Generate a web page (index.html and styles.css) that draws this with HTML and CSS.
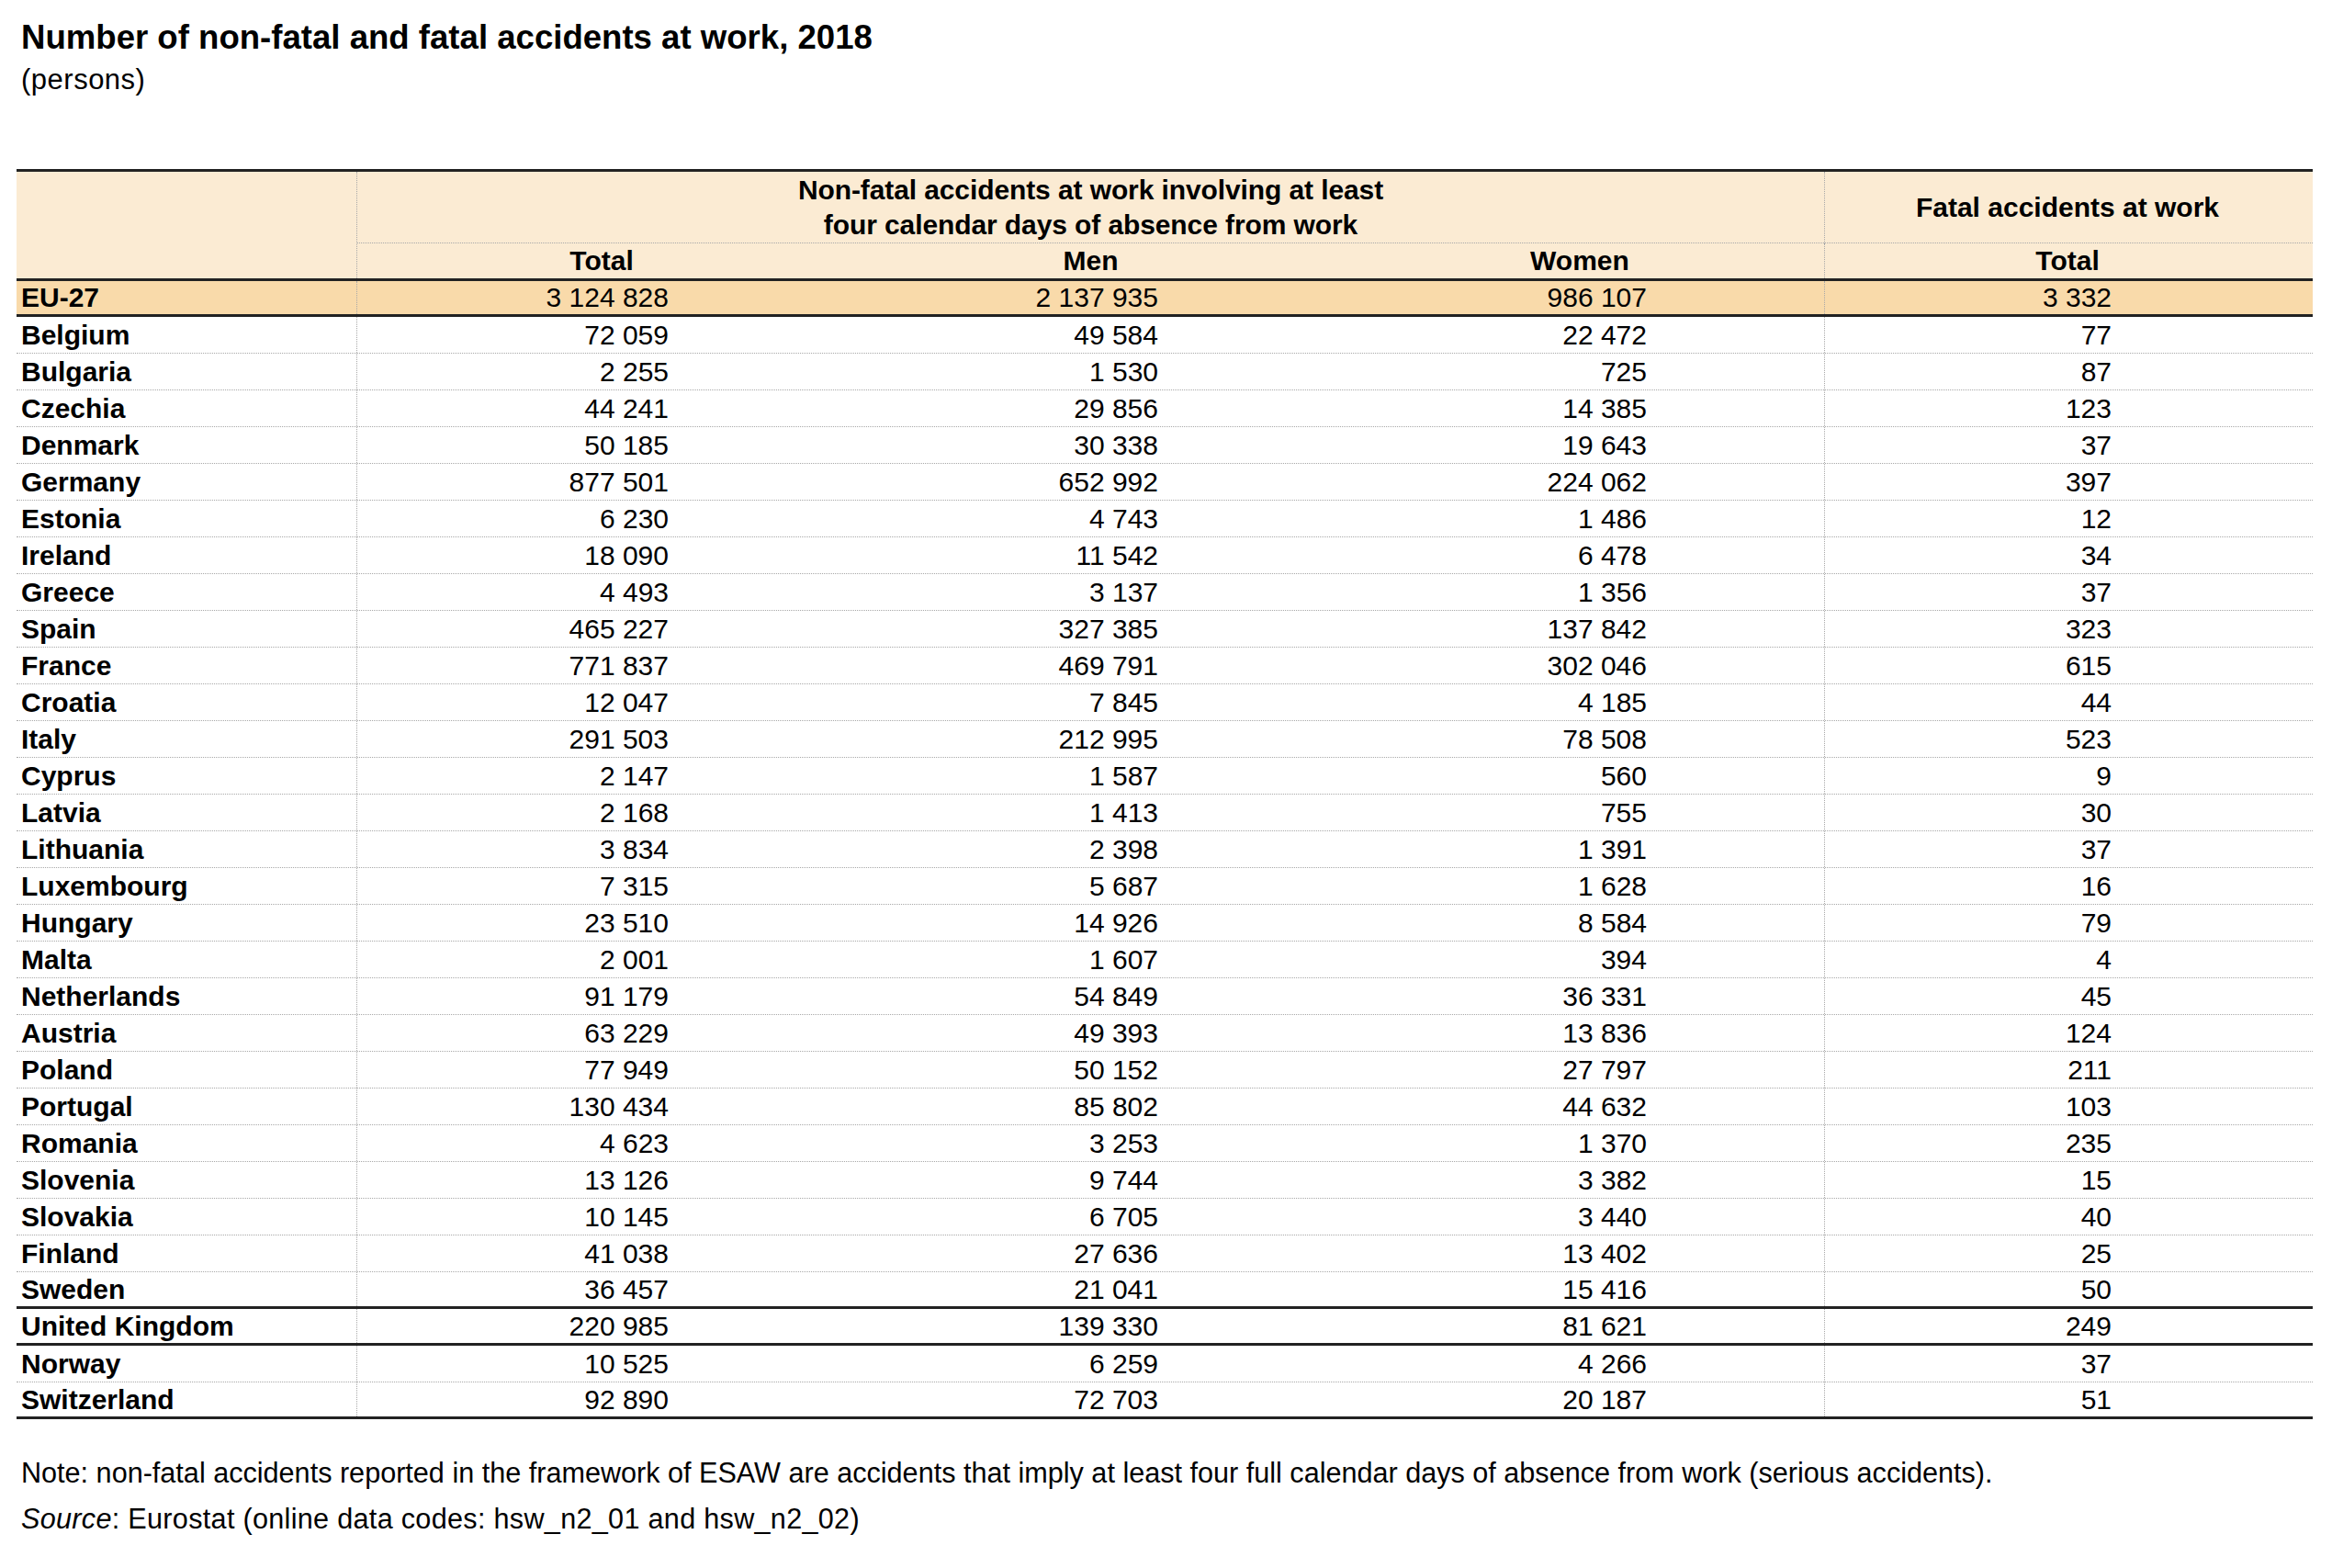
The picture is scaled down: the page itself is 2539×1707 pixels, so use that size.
FILE: index.html
```html
<!DOCTYPE html>
<html lang="en">
<head>
<meta charset="utf-8">
<title>Number of non-fatal and fatal accidents at work, 2018</title>
<link rel="stylesheet" href="styles.css">
</head>
<body>
<div class="page">
  <h1 class="title">Number of non-fatal and fatal accidents at work, 2018</h1>
  <p class="unit">(persons)</p>

  <div class="tbl">
    <div class="thead">
      <div class="h-corner"></div>
      <div class="h-group">Non-fatal accidents at work involving at least<br>four calendar days of absence from work</div>
      <div class="h-fatal">Fatal accidents at work</div>
      <div class="h-sub">Total</div>
      <div class="h-sub">Men</div>
      <div class="h-sub">Women</div>
      <div class="h-sub h-sub-fatal">Total</div>
    </div>

    <div class="row eu"><div class="name">EU-27</div><div class="num">3 124 828</div><div class="num">2 137 935</div><div class="num">986 107</div><div class="num fatal">3 332</div></div>
    <div class="row"><div class="name">Belgium</div><div class="num">72 059</div><div class="num">49 584</div><div class="num">22 472</div><div class="num fatal">77</div></div>
    <div class="row"><div class="name">Bulgaria</div><div class="num">2 255</div><div class="num">1 530</div><div class="num">725</div><div class="num fatal">87</div></div>
    <div class="row"><div class="name">Czechia</div><div class="num">44 241</div><div class="num">29 856</div><div class="num">14 385</div><div class="num fatal">123</div></div>
    <div class="row"><div class="name">Denmark</div><div class="num">50 185</div><div class="num">30 338</div><div class="num">19 643</div><div class="num fatal">37</div></div>
    <div class="row"><div class="name">Germany</div><div class="num">877 501</div><div class="num">652 992</div><div class="num">224 062</div><div class="num fatal">397</div></div>
    <div class="row"><div class="name">Estonia</div><div class="num">6 230</div><div class="num">4 743</div><div class="num">1 486</div><div class="num fatal">12</div></div>
    <div class="row"><div class="name">Ireland</div><div class="num">18 090</div><div class="num">11 542</div><div class="num">6 478</div><div class="num fatal">34</div></div>
    <div class="row"><div class="name">Greece</div><div class="num">4 493</div><div class="num">3 137</div><div class="num">1 356</div><div class="num fatal">37</div></div>
    <div class="row"><div class="name">Spain</div><div class="num">465 227</div><div class="num">327 385</div><div class="num">137 842</div><div class="num fatal">323</div></div>
    <div class="row"><div class="name">France</div><div class="num">771 837</div><div class="num">469 791</div><div class="num">302 046</div><div class="num fatal">615</div></div>
    <div class="row"><div class="name">Croatia</div><div class="num">12 047</div><div class="num">7 845</div><div class="num">4 185</div><div class="num fatal">44</div></div>
    <div class="row"><div class="name">Italy</div><div class="num">291 503</div><div class="num">212 995</div><div class="num">78 508</div><div class="num fatal">523</div></div>
    <div class="row"><div class="name">Cyprus</div><div class="num">2 147</div><div class="num">1 587</div><div class="num">560</div><div class="num fatal">9</div></div>
    <div class="row"><div class="name">Latvia</div><div class="num">2 168</div><div class="num">1 413</div><div class="num">755</div><div class="num fatal">30</div></div>
    <div class="row"><div class="name">Lithuania</div><div class="num">3 834</div><div class="num">2 398</div><div class="num">1 391</div><div class="num fatal">37</div></div>
    <div class="row"><div class="name">Luxembourg</div><div class="num">7 315</div><div class="num">5 687</div><div class="num">1 628</div><div class="num fatal">16</div></div>
    <div class="row"><div class="name">Hungary</div><div class="num">23 510</div><div class="num">14 926</div><div class="num">8 584</div><div class="num fatal">79</div></div>
    <div class="row"><div class="name">Malta</div><div class="num">2 001</div><div class="num">1 607</div><div class="num">394</div><div class="num fatal">4</div></div>
    <div class="row"><div class="name">Netherlands</div><div class="num">91 179</div><div class="num">54 849</div><div class="num">36 331</div><div class="num fatal">45</div></div>
    <div class="row"><div class="name">Austria</div><div class="num">63 229</div><div class="num">49 393</div><div class="num">13 836</div><div class="num fatal">124</div></div>
    <div class="row"><div class="name">Poland</div><div class="num">77 949</div><div class="num">50 152</div><div class="num">27 797</div><div class="num fatal">211</div></div>
    <div class="row"><div class="name">Portugal</div><div class="num">130 434</div><div class="num">85 802</div><div class="num">44 632</div><div class="num fatal">103</div></div>
    <div class="row"><div class="name">Romania</div><div class="num">4 623</div><div class="num">3 253</div><div class="num">1 370</div><div class="num fatal">235</div></div>
    <div class="row"><div class="name">Slovenia</div><div class="num">13 126</div><div class="num">9 744</div><div class="num">3 382</div><div class="num fatal">15</div></div>
    <div class="row"><div class="name">Slovakia</div><div class="num">10 145</div><div class="num">6 705</div><div class="num">3 440</div><div class="num fatal">40</div></div>
    <div class="row"><div class="name">Finland</div><div class="num">41 038</div><div class="num">27 636</div><div class="num">13 402</div><div class="num fatal">25</div></div>
    <div class="row sep"><div class="name">Sweden</div><div class="num">36 457</div><div class="num">21 041</div><div class="num">15 416</div><div class="num fatal">50</div></div>
    <div class="row sep"><div class="name">United Kingdom</div><div class="num">220 985</div><div class="num">139 330</div><div class="num">81 621</div><div class="num fatal">249</div></div>
    <div class="row"><div class="name">Norway</div><div class="num">10 525</div><div class="num">6 259</div><div class="num">4 266</div><div class="num fatal">37</div></div>
    <div class="row sep"><div class="name">Switzerland</div><div class="num">92 890</div><div class="num">72 703</div><div class="num">20 187</div><div class="num fatal">51</div></div>
  </div>

  <p class="note">Note: non-fatal accidents reported in the framework of ESAW are accidents that imply at least four full calendar days of absence from work (serious accidents).</p>
  <p class="note source"><em>Source</em>: Eurostat (online data codes: hsw_n2_01 and hsw_n2_02)</p>
</div>
</body>
</html>
```

FILE: styles.css
```css
* {
  box-sizing: border-box;
}

html, body {
  margin: 0;
  padding: 0;
  background: #ffffff;
}

body {
  font-family: "Liberation Sans", Arial, sans-serif;
  color: #000000;
}

.page {
  padding: 18px 0 0 18px;
}

.title {
  margin: 0 0 0 5px;
  font-size: 36.6px;
  font-weight: bold;
  line-height: 46px;
}

.unit {
  margin: 0 0 0 5px;
  font-size: 31px;
  line-height: 46px;
  letter-spacing: 0.5px;
}

.tbl {
  width: 2500px;
  margin-top: 74px;
  font-size: 30px;
}

.thead {
  display: grid;
  grid-template-columns: 371px 532px 533px 532px 532px;
  grid-template-rows: 78px 38px;
  background: #fbebd3;
  border-top: 3px solid #222222;
  border-bottom: 3px solid #222222;
  font-weight: bold;
}

.h-corner {
  grid-column: 1;
  grid-row: 1 / span 2;
  border-right: 1px dotted #a8a8a8;
}

.h-group {
  grid-column: 2 / span 3;
  grid-row: 1;
  display: flex;
  align-items: center;
  justify-content: center;
  text-align: center;
  line-height: 38px;
  border-bottom: 1px dotted #a8a8a8;
  padding-top: 1px;
  letter-spacing: -0.1px;
}

.h-fatal {
  grid-column: 5;
  grid-row: 1;
  display: flex;
  align-items: center;
  justify-content: center;
  border-left: 1px dotted #a8a8a8;
  border-bottom: 1px dotted #a8a8a8;
  padding-right: 3px;
}

.h-sub {
  grid-row: 2;
  display: flex;
  align-items: center;
  justify-content: center;
  line-height: 38px;
}

.h-sub-fatal {
  border-left: 1px dotted #a8a8a8;
  padding-right: 3px;
}

.row {
  display: grid;
  grid-template-columns: 371px 532px 533px 532px 532px;
  height: 40px;
  border-bottom: 1px dotted #a8a8a8;
}

.row.eu {
  height: 39px;
  background: #f9daaa;
  border-bottom: 3px solid #222222;
}

.row.sep {
  border-bottom: 3px solid #222222;
}

.name {
  display: flex;
  align-items: center;
  padding-left: 5px;
  font-weight: bold;
  border-right: 1px dotted #a8a8a8;
  white-space: nowrap;
}

.num {
  display: flex;
  align-items: center;
  justify-content: flex-end;
  padding-right: 193px;
  white-space: nowrap;
}

.num.fatal {
  border-left: 1px dotted #a8a8a8;
  padding-right: 219px;
}

.note {
  margin: 0 0 0 5px;
  font-size: 30.6px;
  line-height: 50px;
}

.note.source {
  letter-spacing: 0.3px;
}

.tbl + .note {
  margin-top: 33px;
}

.note em {
  font-style: italic;
}
```
